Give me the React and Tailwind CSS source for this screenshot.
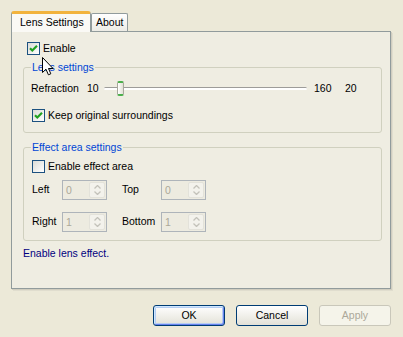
import React from 'react';

function Check({ checked }) {
  return (
    <span className="w-[13px] h-[13px] border border-[#1C5180] bg-gradient-to-br from-[#DCDCD7] to-white flex items-center justify-center shrink-0">
      {checked && (
        <svg width="11" height="11" viewBox="0 0 11 11">
          <path d="M2 5.2 L4.3 7.5 L9 2.8" fill="none" stroke="#21A121" strokeWidth="2.2" />
        </svg>
      )}
    </span>
  );
}

function Spinner({ value }) {
  return (
    <div className="w-[45px] h-[20px] border border-[#AEB4BA] bg-[#EDEBE0] flex items-stretch">
      <span className="flex-1 pl-[3px] text-[#ACA899] leading-[18px]">{value}</span>
      <div className="w-[16px] m-px rounded-[2px] border border-[#E3E2DA] bg-[#F3F2EC] flex flex-col items-center justify-center gap-[2px]">
        <svg width="7" height="4" viewBox="0 0 7 4"><path d="M0.5 3.5 L3.5 0.5 L6.5 3.5" fill="none" stroke="#C3C2BA" strokeWidth="1.3" /></svg>
        <svg width="7" height="4" viewBox="0 0 7 4"><path d="M0.5 0.5 L3.5 3.5 L6.5 0.5" fill="none" stroke="#C3C2BA" strokeWidth="1.3" /></svg>
      </div>
    </div>
  );
}

function Button({ children, def, disabled }) {
  if (disabled) {
    return (
      <button className="w-[72px] h-[21px] rounded-[3px] border border-[#C9C7BA] bg-[#F5F4EA] text-[#ACA899]">
        {children}
      </button>
    );
  }
  return (
    <button
      className={
        'w-[72px] h-[21px] rounded-[3px] border border-[#003C74] bg-gradient-to-b from-white to-[#E3E1D7] text-black ' +
        (def ? 'shadow-[inset_1px_1px_0_#CEE7FF,inset_-1px_-1px_0_#6982EE,inset_0_0_0_2px_#B5CDF2]' : '')
      }
    >
      {children}
    </button>
  );
}

export default function App() {
  return (
    <div className="relative w-[403px] h-[337px] bg-[#ECE9D8] text-[10.5px] text-black font-['Liberation_Sans',Arial,sans-serif] pt-[11px] pl-[11px] overflow-hidden">
      {/* tabs */}
      <div className="flex items-start h-[20px]">
        <div className="relative z-10 w-[80px] h-[21px] rounded-t-[3px] border-x border-[#919B9C] border-t-[3px] border-t-[#F2B33D] bg-[#FAF9F5] pl-[8px] leading-[16px]">
          Lens Settings
        </div>
        <div className="mt-[2px] w-[37px] h-[18px] rounded-t-[2px] border border-b-0 border-[#919B9C] bg-gradient-to-b from-white to-[#ECEBE5] pl-[4px] leading-[17px]">
          About
        </div>
      </div>

      {/* pane */}
      <div className="w-[380px] h-[258px] border border-[#919B9C] bg-[#EFEDE2] shadow-[1px_1px_0_#D0CDBF,2px_2px_0_#E0DDCE]">
        <div className="mt-[10px] ml-[15px] h-[13px] flex items-center gap-[3px]">
          <Check checked />
          <span>Enable</span>
        </div>

        <fieldset className="mt-[6px] ml-[11px] w-[359px] border border-[#D0D0BF] rounded-[3px] pl-[8px] pb-[10px]">
          <legend className="-ml-px px-[1px] text-[#0046D5] leading-[13px]">Lens settings</legend>
          <div className="mt-[7px] h-[15px] flex items-center">
            <span className="w-[56px] -ml-px">Refraction</span>
            <span className="w-[17px]">10</span>
            <div className="relative w-[203px] h-[15px] flex items-center">
              <div className="w-full h-[3px] rounded-full border-t border-[#9D9C99] bg-white" />
              <div className="absolute left-[13px] top-0 w-[7px] h-[15px] rounded-[2px] border-x border-[#A8A89C] border-y-2 border-y-[#4CAF4C] bg-gradient-to-r from-white to-[#E2E0D5]" />
            </div>
            <span className="ml-[7px] w-[31px]">160</span>
            <span>20</span>
          </div>
          <div className="mt-[13px] h-[13px] flex items-center gap-[3px]">
            <Check checked />
            <span>Keep original surroundings</span>
          </div>
        </fieldset>

        <fieldset className="mt-[8px] ml-[11px] w-[359px] border border-[#D0D0BF] rounded-[3px] pl-[8px] pb-[8px]">
          <legend className="-ml-px px-[1px] text-[#0046D5] leading-[13px]">Effect area settings</legend>
          <div className="mt-[6px] h-[13px] flex items-center gap-[3px]">
            <Check />
            <span>Enable effect area</span>
          </div>
          <div className="mt-[7px] flex items-center">
            <span className="w-[30px]">Left</span>
            <Spinner value="0" />
            <span className="ml-[15px] w-[39px]">Top</span>
            <Spinner value="0" />
          </div>
          <div className="mt-[12px] flex items-center">
            <span className="w-[30px]">Right</span>
            <Spinner value="1" />
            <span className="ml-[15px] w-[39px]">Bottom</span>
            <Spinner value="1" />
          </div>
        </fieldset>

        <div className="mt-[6px] ml-[11px] text-[#000080] leading-[13px]">Enable lens effect.</div>
      </div>

      {/* buttons */}
      <div className="mt-[16px] pr-[12px] flex justify-end gap-[11px]">
        <Button def>OK</Button>
        <Button>Cancel</Button>
        <Button disabled>Apply</Button>
      </div>

      {/* mouse pointer */}
      <svg className="absolute left-[42px] top-[57px]" width="13" height="20" viewBox="0 0 13 20">
        <path d="M0.5 0.5 L0.5 15.5 L4 12.2 L6.4 17.8 L8.8 16.8 L6.5 11.5 L11 11.5 Z" fill="white" stroke="black" strokeWidth="1" strokeLinejoin="miter" />
      </svg>
    </div>
  );
}
